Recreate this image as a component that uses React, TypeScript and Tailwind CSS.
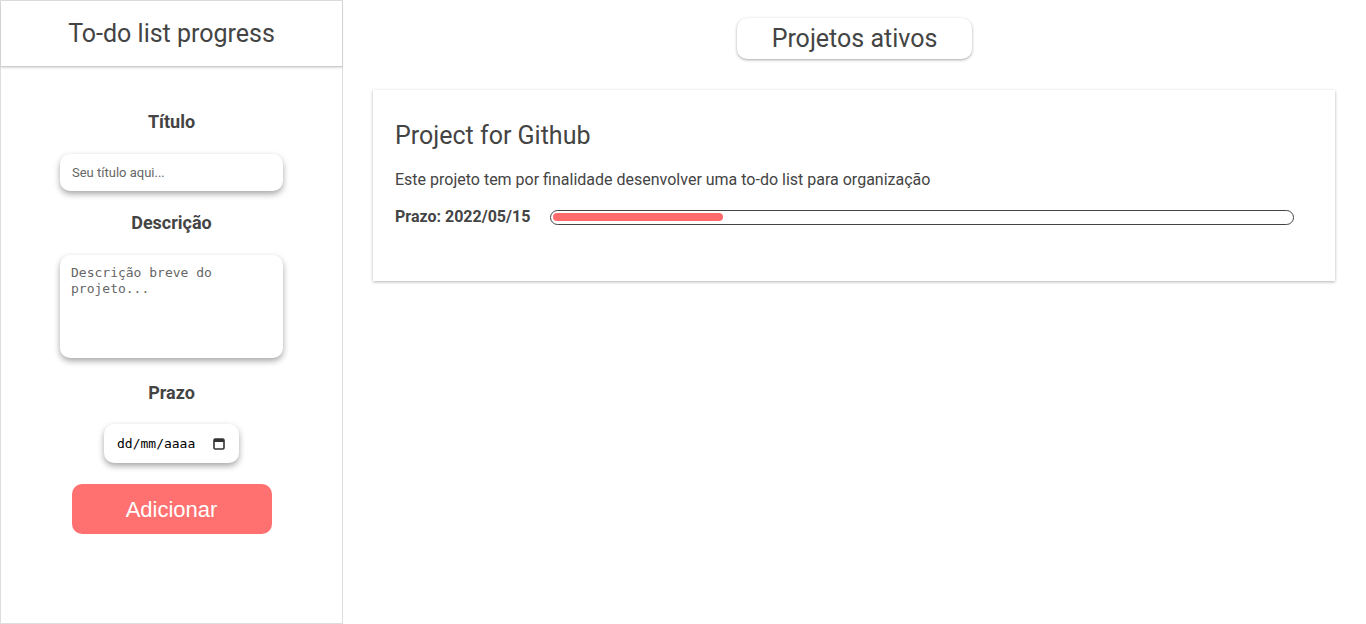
import React from "react";

export default function App() {
  return (
    <div className="flex h-[624px] w-[1366px] bg-white text-[#444]" style={{ fontFamily: "Roboto, 'Noto Sans', sans-serif" }}>
      <aside className="flex h-[624px] w-[343px] shrink-0 flex-col border border-[#ddd]">
        <header className="flex h-[66px] items-center justify-center border-b border-[#ccc] shadow-[0_1px_2px_rgba(0,0,0,0.15)]">
          <h1 className="text-[25px] font-normal text-[#444]">To-do list progress</h1>
        </header>
        <div className="flex flex-col items-center pt-[42px]">
          <label className="text-[18px] font-bold leading-[26px]">Título</label>
          <input
            className="mt-[19px] h-[37px] w-[223px] rounded-[10px] bg-white px-3 text-[13px] shadow-[0_3px_6px_rgba(0,0,0,0.35)] outline-none placeholder:text-[#666]"
            placeholder="Seu título aqui..."
          />
          <label className="mt-[19px] text-[18px] font-bold leading-[26px]">Descrição</label>
          <textarea
            className="mt-[19px] h-[103px] w-[223px] resize-none rounded-[10px] bg-white px-[11px] py-[10px] text-[13px] leading-[16px] shadow-[0_3px_6px_rgba(0,0,0,0.35)] outline-none placeholder:text-[#666]"
            style={{ fontFamily: "'DejaVu Sans Mono', monospace" }}
            placeholder="Descrição breve do projeto..."
          />
          <label className="mt-[22px] text-[18px] font-bold leading-[26px]">Prazo</label>
          <div className="mt-[18px] flex h-[39px] w-[135px] items-center justify-between rounded-[10px] bg-white pl-[13px] pr-[14px] shadow-[0_3px_6px_rgba(0,0,0,0.35)]">
            <span className="text-[13px] text-black" style={{ fontFamily: "'DejaVu Sans Mono', monospace" }}>dd/mm/aaaa</span>
            <svg width="12" height="13" viewBox="0 0 12 13">
              <rect x="1" y="2" width="10" height="10" rx="1.2" fill="none" stroke="#333" strokeWidth="1.6" />
              <rect x="1" y="2" width="10" height="3" fill="#333" />
            </svg>
          </div>
          <button
            className="mt-[21px] h-[50px] w-[200px] rounded-[10px] bg-[#ff7070] text-[22px] text-white"
            style={{ fontFamily: "'Liberation Sans', Arial, sans-serif" }}
          >
            Adicionar
          </button>
        </div>
      </aside>
      <main className="flex flex-1 flex-col items-center px-[30px] pt-[18px]">
        <div className="flex h-[41px] w-[235px] items-center justify-center rounded-[10px] bg-white text-[25px] shadow-[0_1px_3px_rgba(0,0,0,0.35)]">
          Projetos ativos
        </div>
        <section className="mt-[31px] h-[191px] w-[962px] self-start bg-white px-[22px] pt-[32px] shadow-[0_1px_3px_rgba(0,0,0,0.3)]">
          <h2 className="text-[25px] leading-[28px] font-normal">Project for Github</h2>
          <p className="mt-[20px] text-[16px] leading-[20px]">Este projeto tem por finalidade desenvolver uma to-do list para organização</p>
          <div className="mt-[15px] flex items-center">
            <span className="w-[155px] text-[16px] font-bold">Prazo: 2022/05/15</span>
            <div className="flex h-[15px] w-[744px] items-center rounded-full border border-[#444] px-[2px]">
              <div className="h-[8px] rounded-full bg-[#ff6b6b]" style={{ width: "170px" }} />
            </div>
          </div>
        </section>
      </main>
    </div>
  );
}
